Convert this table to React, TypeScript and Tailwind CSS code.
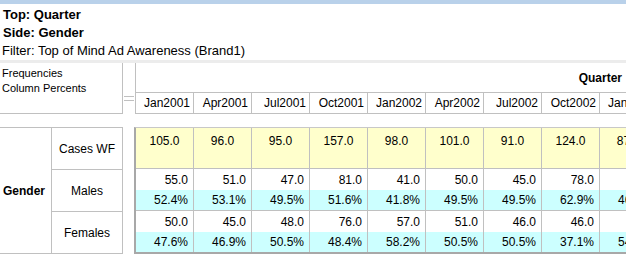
import React from "react";

const cols = ["Jan2001", "Apr2001", "Jul2001", "Oct2001", "Jan2002", "Apr2002", "Jul2002", "Oct2002", "Jan2003"];
const cases = ["105.0", "96.0", "95.0", "157.0", "98.0", "101.0", "91.0", "124.0", "87.0"];

const groups = [
  {
    label: "Males",
    freq: ["55.0", "51.0", "47.0", "81.0", "41.0", "50.0", "45.0", "78.0", "40.0"],
    pct: ["52.4%", "53.1%", "49.5%", "51.6%", "41.8%", "49.5%", "49.5%", "62.9%", "46.0%"],
  },
  {
    label: "Females",
    freq: ["50.0", "45.0", "48.0", "76.0", "57.0", "51.0", "46.0", "46.0", "47.0"],
    pct: ["47.6%", "46.9%", "50.5%", "48.4%", "58.2%", "50.5%", "50.5%", "37.1%", "54.0%"],
  },
];

export default function App() {
  return (
    <div className="w-[626px] h-[255px] overflow-hidden bg-white text-black font-['Liberation_Sans',Arial,sans-serif]">
      <div className="h-[4px] bg-[#b9d1ea]" />

      {/* report title */}
      <div className="pt-[2px] pl-[3px] text-[13px] leading-[18px]">
        <div className="font-bold">Top: Quarter</div>
        <div className="font-bold">Side: Gender</div>
        <div className="-ml-[1px]">Filter: Top of Mind Ad Awareness (Brand1)</div>
      </div>
      <div className="h-[3px] bg-[#ececec]" />

      {/* header */}
      <div className="flex h-[51px]">
        <div className="w-[123px] shrink-0 border-r border-b border-[#c0c0c0] pl-[2px] pt-[3px] text-[11px] leading-[15px]">
          <div>Frequencies</div>
          <div>Column Percents</div>
        </div>
        <div className="w-[12px] shrink-0 flex flex-col pt-[33px] pl-[1px] gap-[3px]">
          <div className="h-px w-[10px] bg-[#c0c0c0]" />
          <div className="h-px w-[10px] bg-[#c0c0c0]" />
        </div>
        <div className="w-[491px] shrink-0 overflow-hidden border-l border-b border-[#c0c0c0] flex flex-col">
          <div className="h-[29px] flex items-center justify-end pr-[4px] text-[12px] font-bold">Quarter</div>
          <div className="h-[21px] flex border-t border-[#c0c0c0] text-[12px]">
            {cols.map((c) => (
              <div key={c} className="w-[58px] shrink-0 border-r border-[#c0c0c0] flex items-center justify-end pr-[3px]">
                {c}
              </div>
            ))}
          </div>
        </div>
      </div>

      <div className="h-[13px]" />

      {/* body */}
      <div className="flex h-[127px] text-[12px]">
        <div className="w-[123px] shrink-0 flex border-t border-r border-b border-[#c0c0c0]">
          <div className="w-[52px] shrink-0 border-r border-[#c0c0c0] flex items-center pl-[3px] font-bold">Gender</div>
          <div className="flex-1 flex flex-col">
            <div className="h-[42px] border-b border-[#c0c0c0] flex items-center justify-center">Cases WF</div>
            <div className="h-[42px] border-b border-[#c0c0c0] flex items-center justify-center">Males</div>
            <div className="flex-1 flex items-center justify-center">Females</div>
          </div>
        </div>
        <div className="w-[11px] shrink-0" />
        <div className="w-[492px] shrink-0 overflow-hidden border-l-2 border-b-2 border-t border-l-[#a8a8a8] border-b-[#a8a8a8] border-t-[#c8c8c8] flex flex-col">
          <div className="h-[42px] flex border-b border-[#c0c0c0] bg-[#ffffcc]">
            {cases.map((v, i) => (
              <div key={i} className="w-[58px] shrink-0 border-r border-[#c0c0c0] text-center pt-[4px]">
                {v}
              </div>
            ))}
          </div>
          {groups.map((g, gi) => (
            <div key={g.label} className={gi === 0 ? "border-b border-[#c0c0c0]" : ""}>
              <div className="h-[21px] flex bg-white">
                {g.freq.map((v, i) => (
                  <div key={i} className="w-[58px] shrink-0 border-r border-[#c0c0c0] flex items-center justify-end pr-[5px]">
                    {v}
                  </div>
                ))}
              </div>
              <div className="h-[20px] flex bg-[#ccffff]">
                {g.pct.map((v, i) => (
                  <div key={i} className="w-[58px] shrink-0 border-r border-[#c0c0c0] flex items-center justify-end pr-[5px]">
                    {v}
                  </div>
                ))}
              </div>
            </div>
          ))}
        </div>
      </div>
    </div>
  );
}
